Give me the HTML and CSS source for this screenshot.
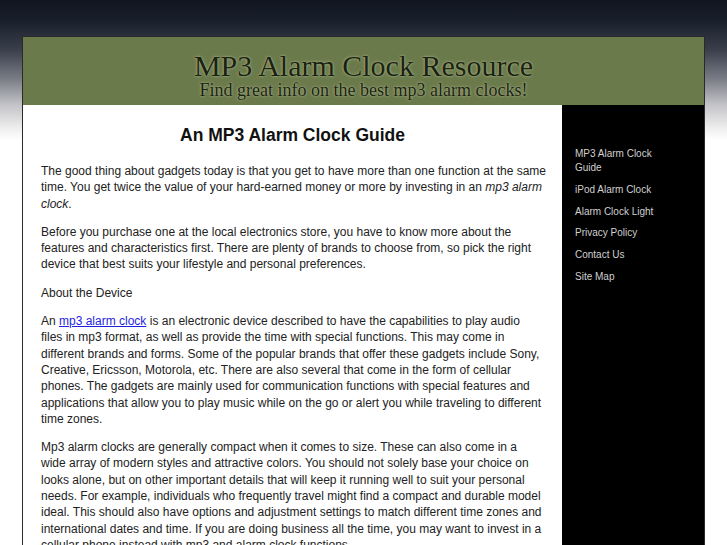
FILE: index.html
```html
<!DOCTYPE html>
<html>
<head>
<meta charset="utf-8">
<title>MP3 Alarm Clock Resource</title>
<link rel="stylesheet" href="styles.css">
</head>
<body>
<div class="page">
  <div class="header">
    <div class="site-title">MP3 Alarm Clock Resource</div>
    <div class="site-tagline">Find great info on the best mp3 alarm clocks!</div>
  </div>
  <div class="main">
    <div class="content">
      <h1 class="post-title">An MP3 Alarm Clock Guide</h1>
      <p>The good thing about gadgets today is that you get to have more than one function at the same time. You get twice the value of your hard-earned money or more by investing in an <em>mp3 alarm clock</em>.</p>
      <p>Before you purchase one at the local electronics store, you have to know more about the features and characteristics first. There are plenty of brands to choose from, so pick the right device that best suits your lifestyle and personal preferences.</p>
      <p>About the Device</p>
      <p>An <a href="#">mp3 alarm clock</a> is an electronic device described to have the capabilities to play audio<br>files in mp3 format, as well as provide the time with special functions. This may come in different brands and forms. Some of the popular brands that offer these gadgets include Sony, Creative, Ericsson, Motorola, etc. There are also several that come in the form of cellular phones. The gadgets are mainly used for communication functions with special features and applications that allow you to play music while on the go or alert you while traveling to different time zones.</p>
      <p>Mp3 alarm clocks are generally compact when it comes to size. These can also come in a <span class="keep">wide array</span> of modern styles and attractive colors. You should not solely base your choice on looks alone, but on other important details that will keep it running well to suit your personal needs. For example, individuals who frequently travel might find a compact and durable model ideal. This should also have options and adjustment settings to match different time zones and international dates and time. If you are doing business all the time, you may want to invest in a cellular phone instead with mp3 and alarm clock functions.</p>
    </div>
    <div class="sidebar">
      <ul class="nav">
        <li><a href="#">MP3 Alarm Clock Guide</a></li>
        <li><a href="#">iPod Alarm Clock</a></li>
        <li><a href="#">Alarm Clock Light</a></li>
        <li><a href="#">Privacy Policy</a></li>
        <li><a href="#">Contact Us</a></li>
        <li><a href="#">Site Map</a></li>
      </ul>
    </div>
  </div>
</div>
</body>
</html>
```
FILE: styles.css
```css
html, body {
  margin: 0;
  padding: 0;
}
body {
  background: #ffffff linear-gradient(to bottom, #10151f 0px, #1a202c 22px, #3a3f4c 50px, #7c7f88 80px, #c4c4c8 105px, #eeeeee 128px, #ffffff 140px) no-repeat;
  font-family: "Liberation Sans", Arial, sans-serif;
  font-size: 12px;
  color: #222;
  overflow: hidden;
}
.page {
  width: 681px;
  margin: 36px auto 0;
  border: 1px solid #2a2a2a;
  border-bottom: none;
}
.header {
  background: #6b7a4b;
  height: 68px;
  box-sizing: border-box;
  padding-top: 14px;
  display: flex;
  flex-direction: column;
  align-items: center;
  color: #1c2211;
  font-family: "Liberation Serif", "Times New Roman", serif;
  text-shadow: 0 0 3px #a9b78a, 0 0 1px #a9b78a;
}
.site-title {
  font-size: 30px;
  line-height: 30px;
}
.site-tagline {
  font-size: 18px;
  line-height: 18px;
}
.main {
  display: flex;
  align-items: stretch;
}
.content {
  width: 505px;
  background: #fff;
  padding: 16px 16px 0 18px;
}
.post-title {
  font-size: 17.5px;
  font-weight: bold;
  text-align: center;
  margin: 3px 2px 17px 0;
  line-height: 22px;
  color: #111;
}
.content p {
  margin: 0 0 12px;
  line-height: 16.3px;
}
.content a {
  color: #1f1fe0;
}
.keep {
  white-space: nowrap;
}
.sidebar {
  width: 142px;
  background: #000;
  min-height: 500px;
}
.nav {
  list-style: none;
  margin: 0;
  padding: 42px 0 0 13px;
  width: 100px;
}
.nav li {
  line-height: 14px;
  margin-bottom: 7.8px;
  font-size: 10px;
}
.nav a {
  color: #d0d0d0;
  text-decoration: none;
}
```
